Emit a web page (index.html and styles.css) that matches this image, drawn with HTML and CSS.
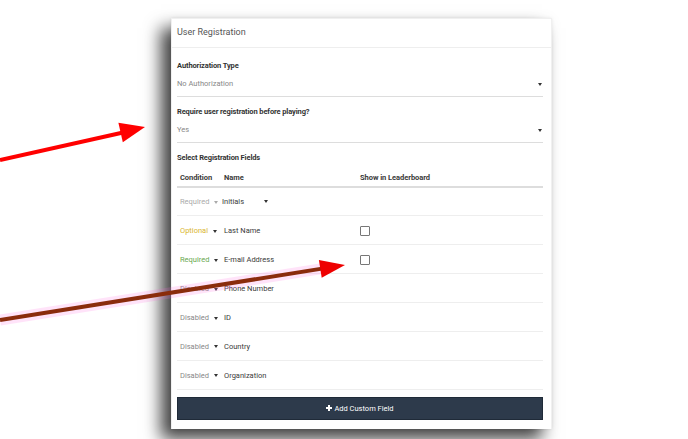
FILE: index.html
```html
<!DOCTYPE html>
<html>
<head>
<meta charset="utf-8">
<link rel="stylesheet" href="styles.css">
</head>
<body>
<div class="card">
  <div class="card-header">User Registration</div>
  <div class="card-body">
    <div class="field">
      <div class="label">Authorization Type</div>
      <div class="select"><span>No Authorization</span><span class="caret"></span></div>
    </div>
    <div class="field">
      <div class="label">Require user registration before playing?</div>
      <div class="select"><span>Yes</span><span class="caret"></span></div>
    </div>
    <div class="label">Select Registration Fields</div>
    <div class="table">
      <div class="row head">
        <div class="cell">Condition</div>
        <div class="cell">Name</div>
        <div class="cell">Show in Leaderboard</div>
      </div>
      <div class="row">
        <div class="cell cond muted">Required <span class="caret light"></span></div>
        <div class="cell name-select"><span>Initials</span><span class="caret"></span></div>
        <div class="cell"></div>
      </div>
      <div class="row">
        <div class="cell cond optional">Optional <span class="caret"></span></div>
        <div class="cell">Last Name</div>
        <div class="cell"><span class="checkbox"></span></div>
      </div>
      <div class="row">
        <div class="cell cond required">Required <span class="caret"></span></div>
        <div class="cell">E-mail Address</div>
        <div class="cell"><span class="checkbox"></span></div>
      </div>
      <div class="row">
        <div class="cell cond disabled">Disabled <span class="caret"></span></div>
        <div class="cell">Phone Number</div>
        <div class="cell"></div>
      </div>
      <div class="row">
        <div class="cell cond disabled">Disabled <span class="caret"></span></div>
        <div class="cell">ID</div>
        <div class="cell"></div>
      </div>
      <div class="row">
        <div class="cell cond disabled">Disabled <span class="caret"></span></div>
        <div class="cell">Country</div>
        <div class="cell"></div>
      </div>
      <div class="row">
        <div class="cell cond disabled">Disabled <span class="caret"></span></div>
        <div class="cell">Organization</div>
        <div class="cell"></div>
      </div>
    </div>
    <button class="add-btn"><svg class="plus" width="6" height="6" viewBox="0 0 6 6"><rect x="2" y="0" width="2" height="6" fill="#fff"/><rect x="0" y="2" width="6" height="2" fill="#fff"/></svg>Add Custom Field</button>
  </div>
</div>
<svg class="arrows" width="688" height="439" viewBox="0 0 688 439">
  <line x1="0" y1="160" x2="122" y2="132.8" stroke="#ff0000" stroke-width="4"/>
  <polygon points="145,127 118.4,122.7 122.8,142.3" fill="#ff0000"/>
  <line x1="0" y1="320" x2="322" y2="268.6" stroke="#ff66dd" stroke-opacity="0.18" stroke-width="11"/>
  <line x1="0" y1="320" x2="322" y2="268.6" stroke="#8a2c0c" stroke-width="4"/>
  <polygon points="345,265 318.9,260 321.7,277.8" fill="#ee0000"/>
</svg>
</body>
</html>
```

FILE: styles.css
```css
* { box-sizing: border-box; }
html, body { margin: 0; padding: 0; background: #fff; }
body {
  width: 688px;
  height: 439px;
  overflow: hidden;
  position: relative;
  font-family: Roboto, "Liberation Sans", Arial, sans-serif;
  font-size: 7.5px;
  color: #3a3a3a;
}
.card {
  margin: 18px 0 0 171px;
  width: 381px;
  height: 411px;
  background: #fff;
  border: 1px solid #f0f0f0;
  border-bottom: none;
  box-shadow: -10px 10px 16px rgba(0,0,0,0.75), 0 0 3px rgba(0,0,0,0.08);
  display: flex;
  flex-direction: column;
}
.card-header {
  height: 29px;
  line-height: 27px;
  padding-left: 5px;
  font-size: 9px;
  color: #555;
  border-bottom: 1px solid #eee;
}
.card-body {
  padding: 13px 8px 0 5px;
  display: flex;
  flex-direction: column;
}
.field { margin-bottom: 10px; }
.label {
  font-weight: bold;
  line-height: 10px;
  color: #333;
  letter-spacing: -0.12px;
}
.select {
  margin-top: 3px;
  height: 23px;
  line-height: 20px;
  padding-bottom: 2px;
  border-bottom: 1px solid #ddd;
  color: #888;
  display: flex;
  justify-content: space-between;
  align-items: center;
}
.select .caret { margin-right: 1px; }
.caret {
  display: inline-block;
  width: 0;
  height: 0;
  border-top: 3px solid #333;
  border-left: 2.5px solid transparent;
  border-right: 2.5px solid transparent;
  vertical-align: middle;
}
.caret.light { border-top-color: #aaa; }
.table { display: flex; flex-direction: column; }
.row {
  display: grid;
  grid-template-columns: 44px 136px 1fr;
  height: 28.9px;
  padding-top: 1px;
  align-items: center;
  border-bottom: 1px solid #eee;
}
.row.head {
  height: 24.5px;
  padding-top: 6px;
  align-items: center;
  font-weight: bold;
  letter-spacing: -0.05px;
  border-bottom: 2px solid #ddd;
}
.cell { padding-left: 3px; white-space: nowrap; }
.cond .caret { margin-left: 3px; }
.muted { color: #aaa; }
.optional { color: #d9b52c; }
.required { color: #6aa84f; }
.disabled { color: #888; }
.name-select {
  padding-left: 1px;
  display: flex;
  align-items: center;
}
.name-select span:first-child { width: 42px; }
.checkbox {
  display: inline-block;
  width: 10px;
  height: 10px;
  border: 1px solid #777;
  border-radius: 1px;
  vertical-align: middle;
}
.add-btn {
  margin-top: 7px;
  height: 23px;
  width: 100%;
  background: #2d3a4b;
  border: 1px solid #1f2a38;
  color: #fff;
  font-family: Roboto, "Liberation Sans", Arial, sans-serif;
  font-size: 7.5px;
  display: flex;
  align-items: center;
  justify-content: center;
  gap: 2px;
  padding: 0;
}
.arrows {
  position: absolute;
  left: 0;
  top: 0;
  pointer-events: none;
}
```
